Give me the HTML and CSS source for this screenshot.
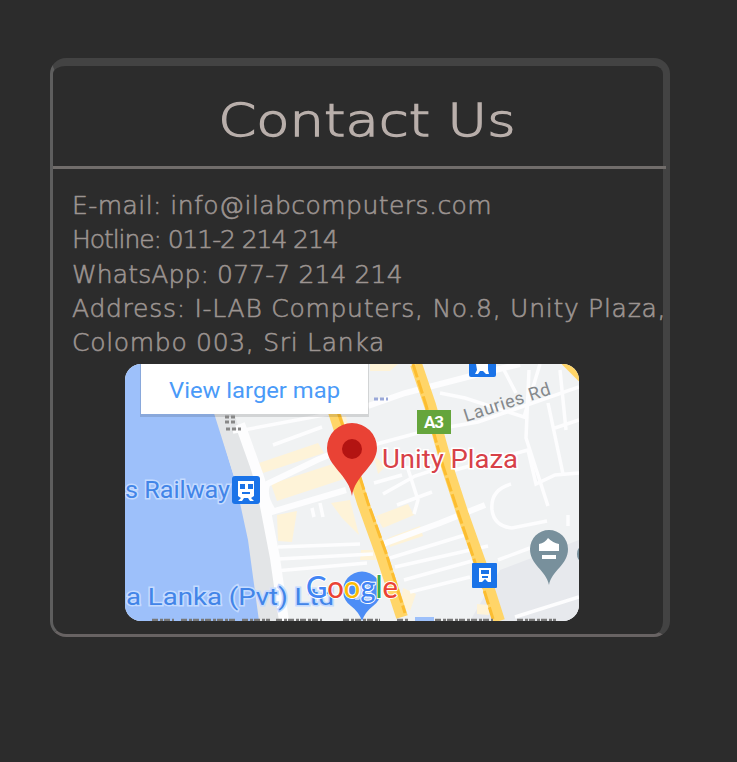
FILE: index.html
```
<!DOCTYPE html>
<html lang="en">
<head>
<meta charset="utf-8">
<title>Contact Us</title>
<link rel="stylesheet" href="styles.css">
</head>
<body>
<section class="card">
  <header class="card-header"><h1 class="title">Contact Us</h1></header>
  <address class="details">
    <span class="line email">E-mail: info@ilabcomputers.com</span>
    <span class="line hotline">Hotline: 011-2 214 214</span>
    <span class="line whatsapp">WhatsApp: 077-7 214 214</span>
    <span class="line street">Address: I-LAB Computers, No.8, Unity Plaza,</span>
    <span class="line city">Colombo 003, Sri Lanka</span>
  </address>
  <svg class="map" viewBox="125 364 454 257" role="img" aria-label="Map of Unity Plaza">
    <rect class="land" x="125" y="364" width="454" height="257"/>
    <path class="ground" d="M470 621L500 570L579 540V621Z"/>
    <path class="water" d="M125 364H197L216 416L232 470L246 515L262 621H125Z"/>
    <path class="shore" d="M213 410L235 480L248 540L259 621H283L270 545L246 450L233 410Z"/>
    <g class="block">
      <path d="M259 463L318 443L324 453L263 473Z"/>
      <path d="M271 484L342 461L350 477L277 501Z"/>
      <path d="M277 515L297 511L292 542L278 541Z"/>
      <path d="M331 503L350 500L359 535L342 518Z"/>
      <path d="M376 516L408 504L414 515L383 528ZM388 538L420 526L423 536L390 547ZM361 550H378V560H360Z"/>
      <path d="M374 456L386 466L378 474ZM332 414L346 416L348 426L334 424ZM370 364H398L390 371H370ZM403 588L416 594L410 611L400 606ZM477 604L489 605V615L477 614Z"/>
    </g>
    <g class="road">
      <path class="wide" d="M240 424L260 480L275 558L284 621"/>
      <path class="mid" d="M368 406L405 393L475 375L520 364"/>
      <path class="mid" d="M265 485L317 460L350 446M268 513L346 490M375 547L440 523L485 505M267 485Q263 496 273 511"/>
      <path d="M233 432L340 412M273 445L322 427M278 547L360 544M278 559L373 554M275 571L367 563M390 558L465 535M395 567L488 546M404 580L472 561M410 592L470 577"/>
      <path d="M373 445L425 431L478 422L579 387M383 494L415 476L455 463M397 505L432 492M374 483L402 475M407 466L418 500L414 514M455 470L528 450L536 484L555 475L579 473"/>
      <path d="M440 393L465 398L524 417L540 364M504 370L516 393M529 370L526 438L548 506M548 403L563 474M560 370L566 430M552 429L579 420"/>
      <path d="M492 510Q490 490 511 484M492 510Q494 526 512 528L547 521M568 515V526M498 560L530 548M515 617L579 597M320 503L323 517M312 508L314 517"/>
    </g>
    <g class="highway">
      <path d="M334 412L348 455L363 503L381 553L402 617"/>
      <path d="M416 364L430 405L447 466L463 515L484 574L499 621"/>
      <path d="M566 360L583 377"/>
    </g>
    <g class="highway-lines">
      <path d="M338 412L353 455L368 503L386 553L405 613"/>
      <path d="M413 364L426 405L443 466L459 515L479 574L493 619"/>
    </g>

    <rect class="shadow" x="140" y="361" width="229" height="56"/>
    <rect class="panel" x="141" y="360" width="227" height="54"/>
    <text class="link" x="169" y="398" textLength="171" lengthAdjust="spacingAndGlyphs">View larger map</text>

    <path class="tiny" d="M225 417H236M225 422H235M226 429H241"/>
    <path class="tiny tiny-blue" d="M374 399H388"/>
    <rect class="shield" x="417" y="410" width="34" height="24"/>
    <text class="shield-text" x="424" y="428" textLength="20">A3</text>
    <text class="street-name" x="466" y="422" transform="rotate(-18 466 422)" textLength="90">Lauries Rd</text>
    <text class="place" x="382" y="468" textLength="136" lengthAdjust="spacingAndGlyphs">Unity Plaza</text>

    <path class="pin" d="M352 496C349 475 327 466 327 448A25 25 0 0 1 377 448C377 466 355 475 352 496Z"/>
    <circle class="pin-dot" cx="352" cy="449" r="10"/>

    <text class="poi" x="125" y="498" textLength="105" lengthAdjust="spacingAndGlyphs">s Railway</text>
    <text class="poi" x="126" y="605" textLength="208" lengthAdjust="spacingAndGlyphs">a Lanka (Pvt) Ltd</text>

    <g class="station">
      <rect x="232" y="476" width="28" height="28" rx="3"/>
      <rect x="469" y="357" width="27" height="20" rx="2"/>
      <rect x="472" y="563" width="25" height="25" rx="1"/>
    </g>
    <path class="glyph" fill-rule="evenodd" d="M238 481H254V496L251 498L254 501H250L248 498H244L242 501H238L241 498L238 496ZM240 484V489H245V484ZM248 484V489H253V484ZM242 492V494H250V492Z"/>
    <path class="glyph" d="M476 364H488V370L489 374H486L483 371H480L478 374H475L477 370Z"/>
    <path class="glyph" fill-rule="evenodd" d="M479 568H491V582H488L485 579L482 582H479ZM481 570V574H489V570ZM482 576V578H488V576Z"/>

    <path class="grey-pin" d="M549 585C546 570 530 565 530 549A19 19 0 0 1 568 549C568 565 552 570 549 585Z"/>
    <path class="glyph" d="M539 544Q545 543 548 538Q553 543 559 544V551H539ZM542 555H556V559H542Z"/>
    <ellipse class="grey-pin" cx="581" cy="554" rx="4" ry="7"/>

    <path class="blue-pin" d="M362 621Q359 612 351 606A19 19 0 1 1 373 606Q365 612 362 621Z"/>
    <path class="glyph" d="M364 581L371 589L373 600H366L363 594L359 600H355L358 589Z" opacity=".6"/>
    <text class="brand" x="306" y="598" textLength="92" lengthAdjust="spacingAndGlyphs"><tspan class="g-blue">G</tspan><tspan class="g-red">o</tspan><tspan class="g-yellow">o</tspan><tspan class="g-blue">g</tspan><tspan class="g-green">l</tspan><tspan class="g-red">e</tspan></text>
    <path class="credits" d="M152 620H174M181 620H235M242 620H270M276 620H322M343 620H380M397 620H408M435 620H493M517 620H556"/>
    <path class="credits-bar" d="M415 619H434"/>
  </svg>
</section>
</body>
</html>
```
FILE: styles.css
```
* { box-sizing: border-box; }
body {
  margin: 0;
  padding: 58px 67px 0 50px;
  min-height: 762px;
  background: #2c2c2c;
  color: #9c9491;
  font-family: "DejaVu Sans", sans-serif;
}
.card {
  height: 579px;
  border-style: solid;
  border-width: 8px 7px 3px 3px;
  border-color: #434343 #434343 #686363 #5e5e5e;
  border-radius: 16px;
}
.card-header {
  height: 103px;
  margin-right: -3px;
  display: flex;
  align-items: center;
  justify-content: center;
  border-bottom: 3px solid #716d6b;
}
.title {
  margin: 9px 0 0 15px;
  font-size: 45px;
  line-height: 54px;
  font-weight: 200;
  color: #b9afab;
  -webkit-text-stroke: 1.3px #b9afab;
  transform: scaleX(1.21);
}
.details {
  padding: 20px 0 0 19px;
  font-style: normal;
  font-weight: 200;
  font-size: 25px;
  line-height: 34.3px;
  white-space: nowrap;
  -webkit-text-stroke: .6px #9c9491;
}
.line { display: block; }
.email { letter-spacing: .45px; }
.hotline { letter-spacing: -1.08px; }
.whatsapp { letter-spacing: .12px; }
.street { letter-spacing: .73px; }
.city { letter-spacing: .7px; }
.map {
  display: block;
  width: 454px;
  height: 257px;
  margin: 4px 0 0 72px;
  border-radius: 16px;
}
.land { fill: #f0f2f3; }
.ground { fill: #e7e9ed; }
.water { fill: #9dc0fa; }
.shore { fill: #e3e5e7; }
.block { fill: #fef3d8; }
.road { fill: none; stroke: #fdfdfe; stroke-width: 3.5; }
.road .wide { stroke-width: 10; }
.road .mid { stroke-width: 6; }
.highway { fill: none; stroke: #ffd568; stroke-width: 12; }
.highway-lines { fill: none; stroke: #fcbd30; stroke-width: 3; stroke-dasharray: 14 3; }
.shadow { fill: #000; opacity: .12; }
.panel { fill: #fff; }
.link { fill: #4a9af8; font: 22px Roboto, sans-serif; }
.tiny { stroke: #888; stroke-width: 3; stroke-dasharray: 4 2; }
.tiny-blue { stroke: #9aa8d8; }
.shield { fill: #65a53c; }
.shield-text { fill: #fff; font: bold 17px Roboto, sans-serif; }
.street-name { fill: #85898c; font: 18px Roboto, sans-serif; }
.place { fill: #d74148; stroke: #fff; stroke-width: 3px; paint-order: stroke; font: 25px Roboto, sans-serif; }
.pin { fill: #e94235; }
.pin-dot { fill: #b31412; }
.poi { fill: #4285e8; stroke: #c5dbff; stroke-width: 3px; paint-order: stroke; font: 24px Roboto, sans-serif; }
.station { fill: #1a73e8; }
.glyph { fill: #fff; }
.grey-pin { fill: #78909c; }
.blue-pin { fill: #4d8df6; }
.brand { stroke: #fff; stroke-width: 2px; paint-order: stroke; font: 500 30px Lato, sans-serif; }
.g-blue { fill: #4285f4; }
.g-red { fill: #ea4335; }
.g-yellow { fill: #fbbc05; }
.g-green { fill: #34a853; }
.credits { stroke: #777; stroke-width: 2.5; stroke-dasharray: 6 2 3 1; }
.credits-bar { stroke: #9dc0fa; stroke-width: 4; }
```
